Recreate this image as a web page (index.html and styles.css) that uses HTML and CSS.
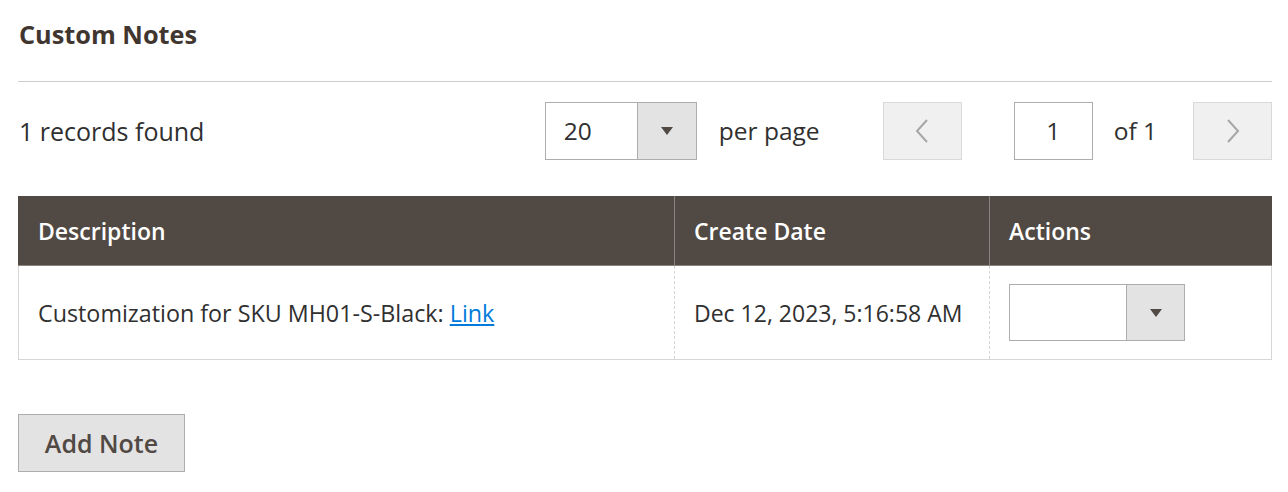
FILE: index.html
```html
<!DOCTYPE html>
<html>
<head>
<meta charset="utf-8">
<link rel="stylesheet" href="styles.css">
</head>
<body>
<div class="page">
  <div class="title"><span>Custom Notes</span></div>
  <div class="toolbar">
    <div class="records">1 records found</div>
    <div class="spacer"></div>
    <div class="select perpage">
      <span class="val">20</span>
      <span class="btn"><span class="tri"></span></span>
    </div>
    <div class="label pp">per page</div>
    <div class="pager-btn prev">
      <svg width="14" height="26" viewBox="0 0 14 26"><polyline points="12,2 2,13 12,24" fill="none" stroke="#a6a6a6" stroke-width="2"/></svg>
    </div>
    <div class="page-input">1</div>
    <div class="label of">of 1</div>
    <div class="pager-btn next">
      <svg width="14" height="26" viewBox="0 0 14 26"><polyline points="2,2 12,13 2,24" fill="none" stroke="#a6a6a6" stroke-width="2"/></svg>
    </div>
  </div>
  <table class="grid">
    <thead>
      <tr>
        <th class="c1">Description</th>
        <th class="c2">Create Date</th>
        <th class="c3">Actions</th>
      </tr>
    </thead>
    <tbody>
      <tr>
        <td class="c1">Customization for SKU MH01-S-Black: <a href="#">Link</a></td>
        <td class="c2">Dec 12, 2023, 5:16:58 AM</td>
        <td class="c3">
          <div class="select action">
            <span class="val"></span>
            <span class="btn"><span class="tri"></span></span>
          </div>
        </td>
      </tr>
    </tbody>
  </table>
  <div class="actions">
    <button class="add">Add Note</button>
  </div>
</div>
</body>
</html>
```

FILE: styles.css
```css
html, body {
  margin: 0;
  padding: 0;
  background: #ffffff;
}
body {
  font-family: "Open Sans", "Liberation Sans", sans-serif;
  color: #303030;
}
.page {
  padding: 0 16px 0 18px;
}
.title {
  height: 81px;
  border-bottom: 1px solid #cccccc;
  box-sizing: content-box;
}
.title span {
  display: block;
  padding: 17px 0 0 1px;
  font-size: 25.3px;
  line-height: 34px;
  font-weight: 700;
  color: #41362f;
}
.toolbar {
  display: flex;
  align-items: center;
  padding-top: 20px;
  height: 57px;
  margin-bottom: 37px;
}
.records {
  font-size: 25px;
  padding-left: 1px;
  color: #303030;
}
.spacer {
  flex: 1;
}
.select {
  display: flex;
  box-sizing: border-box;
  border: 1px solid #adadad;
  background: #fff;
}
.select .val {
  flex: 1;
  display: flex;
  align-items: center;
  padding-left: 18px;
  font-size: 24.5px;
  color: #303030;
}
.select .btn {
  width: 58px;
  background: #e3e3e3;
  border-left: 1px solid #adadad;
  display: flex;
  align-items: center;
  justify-content: center;
}
.tri {
  width: 0;
  height: 0;
  border-left: 6px solid transparent;
  border-right: 6px solid transparent;
  border-top: 8px solid #514943;
}
.perpage {
  width: 152px;
  height: 58px;
}
.label {
  font-size: 24.5px;
  color: #303030;
}
.pp {
  margin-left: 22px;
  margin-right: 63px;
}
.pager-btn {
  width: 79px;
  height: 58px;
  box-sizing: border-box;
  background: #f0f0f0;
  border: 1px solid #d9d9d9;
  display: flex;
  align-items: center;
  justify-content: center;
}
.page-input {
  margin-left: 52px;
  width: 79px;
  height: 58px;
  box-sizing: border-box;
  border: 1px solid #adadad;
  display: flex;
  align-items: center;
  justify-content: center;
  font-size: 24.5px;
}
.of {
  margin-left: 21px;
  margin-right: 36px;
}
.grid {
  width: 100%;
  border-collapse: collapse;
  table-layout: fixed;
}
.grid th {
  background: #514943;
  color: #ffffff;
  font-weight: 600;
  font-size: 23px;
  text-align: left;
  height: 68px;
  padding: 0 0 0 19px;
  border: 1px solid #8a837f;
  border-top-color: #514943;
  border-bottom-color: #8a837f;
}
.grid th.c1 { border-left-color: #514943; width: 636px; }
.grid th.c2 { width: 295px; }
.grid th.c3 { border-right-color: #514943; }
.grid td {
  font-size: 23.3px;
  height: 93px;
  padding: 0 0 0 19px;
  border: 1px solid #d6d6d6;
  border-left-style: dashed;
  border-right-style: dashed;
  color: #303030;
}
.grid td.c2 { font-size: 23px; }
.grid td.c1 { border-left-style: solid; }
.grid td.c3 { border-right-style: solid; }
.grid a {
  color: #007bdb;
  text-decoration: underline;
}
.action {
  width: 176px;
  height: 57px;
}
.action .btn {
  width: 57px;
}
.actions {
  margin-top: 54px;
}
.add {
  font-family: "Open Sans", "Liberation Sans", sans-serif;
  font-size: 25px;
  font-weight: 600;
  color: #514943;
  background: #e3e3e3;
  border: 1px solid #adadad;
  height: 58px;
  width: 167px;
  padding: 0;
  margin: 0;
}
```
